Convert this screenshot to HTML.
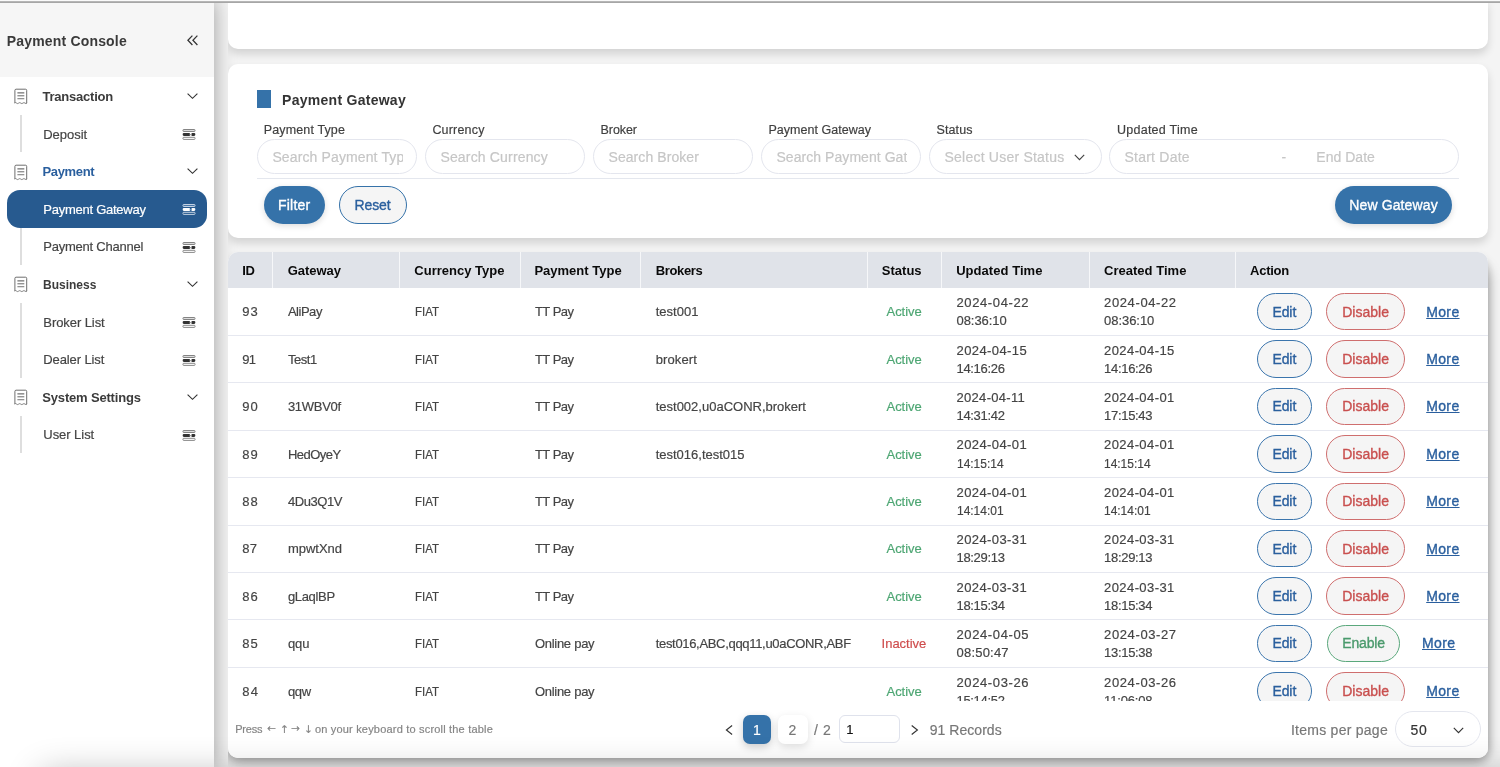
<!DOCTYPE html>
<html lang="en">
<head>
<meta charset="utf-8">
<title>Payment Console - Payment Gateway</title>
<style>
*{box-sizing:border-box;margin:0;padding:0}
html,body{width:1500px;height:767px;overflow:hidden}
body{font-family:"Liberation Sans",sans-serif;background:#f4f4f4;color:#444;position:relative;font-size:13px}
.topline{position:absolute;left:0;top:0;width:1500px;height:3px;background:linear-gradient(#fafafa 0,#fafafa 1px,#b6b6b6 1px,#b6b6b6 2px,#a6a6a6 2px,#a6a6a6 3px);z-index:50}
.abs{position:absolute;white-space:nowrap}
.side,.main{will-change:transform}
.main{position:absolute;left:228.3px;top:0;width:1271.7px;height:767px;z-index:2;overflow:hidden}
.t{position:absolute;white-space:nowrap;line-height:16px;display:block;-webkit-text-stroke:0.18px}
/* ---------- sidebar ---------- */
.side{position:absolute;left:0;top:0;width:214px;height:767px;background:#fff;box-shadow:0 0 20px rgba(0,0,0,.36);z-index:1}
.side .head{position:absolute;left:0;top:0;width:214px;height:77px;background:#f6f6f6}
.side .head svg{position:absolute;left:186.8px;top:35.2px}
.menu{position:absolute;left:0;top:77.2px;width:214px}
.mi{position:relative;height:37.6px;width:214px}
.mi .ric{position:absolute;left:13.5px;top:11.3px}
.mi .chev{position:absolute;left:186.6px;top:15.6px}
.si{position:relative;height:37.6px;width:214px}
.si:before{content:"";position:absolute;left:20.3px;top:0;width:1.8px;height:37.6px;background:#dedede}
.si .cic{position:absolute;left:181.8px;top:14.2px}
.si.on .pill{position:absolute;left:6.9px;top:0;width:199.9px;height:37.6px;border-radius:13px;background:#275a8f}
/* ---------- cards ---------- */
.card{position:absolute;left:0;width:1260.2px;background:#fff;z-index:2;box-shadow:0 5px 9px rgba(0,0,0,.14)}
.c0{top:0;height:48.5px;border-radius:0 0 10px 10px}
.c1{top:63.5px;height:174px;border-radius:10px}
.c2{top:252px;height:505.6px;border-radius:10px;overflow:hidden}
.c2sh{position:absolute;left:0;top:266px;width:1260.2px;height:491.6px;border-radius:10px;z-index:1;box-shadow:0 1px 13px rgba(0,0,0,.38)}
/* ---------- filter ---------- */
.blk{position:absolute;left:28.7px;top:26.5px;width:14px;height:18px;background:#3572a9}
.inp{position:absolute;top:75.3px;height:35.3px;border:1px solid #e4e6ee;border-radius:18px;background:#fff}
.inp .t{margin:-1px 0 0 -1px}
.inp .selchev{position:absolute;left:144.4px;top:13.8px}
.hr{position:absolute;left:28.7px;top:114.4px;width:1202.6px;height:1px;background:#e4e7ee}
.btn{position:absolute;top:122.5px;height:37.6px;border-radius:19px}
.btn.pri{background:#3572a9;box-shadow:0 2px 6px rgba(0,0,0,.14)}
.btn.sec{background:#f5f5f5;border:1px solid #3572a9}
.btn.sec .t{margin:-1px 0 0 -1px}
/* ---------- table ---------- */
.thead{position:absolute;left:0;top:0;width:1260.2px;height:36.3px;background:#e0e3e9}
.th{position:absolute;top:0;height:36.3px;border-right:1px solid #f6f7f9}
.th.last{border-right:0}
.tbody{position:absolute;left:0;top:36px;width:1260.2px;height:413px;overflow:hidden}
.tr{position:relative;height:47.42px;width:1260.2px}
.tr:after{content:"";position:absolute;left:0;bottom:-0.5px;width:1260.2px;height:1px;background:#e6e8f0}
.ab{position:absolute;top:5px;height:37.4px;border-radius:19px;border:1px solid;background:#f5f5f5}
.ab .t{margin:-1px 0 0 -1px}
.ab.ed{left:1028.7px;width:55px;border-color:#3b75ad}
.ab.dis{left:1098px;width:78.7px;border-color:#cf6e6e}
.ab.en{left:1098.5px;width:73.8px;border-color:#5aa87c}
.more{text-decoration:underline}
/* ---------- pagination ---------- */
.pag{position:absolute;left:0;top:449px;width:1260.2px;height:56.6px;background:#fff}
.pg{position:absolute;top:13.9px;width:29.7px;height:28.8px;border-radius:7px;background:#fff;box-shadow:0 3px 9px rgba(0,0,0,.13)}
.pg.on{width:28.1px;background:#3572a9;box-shadow:0 3px 9px rgba(0,0,0,.2)}
.pin{position:absolute;left:610.7px;top:13.9px;width:61.7px;height:28.6px;border:1px solid #dfe2ec;border-radius:6px}
.pin .t{margin:-1px 0 0 -1px}
.psel{position:absolute;left:1166.9px;top:10.3px;width:86px;height:35.5px;border:1px solid #e4e6ee;border-radius:18px}
.psel .t{margin:-1px 0 0 -1px}
.psel svg{position:absolute;left:57.4px;top:14.6px}
.botfade{position:absolute;left:0;top:0;width:1500px;height:767px;overflow:hidden;z-index:60;pointer-events:none}
.botfade i{position:absolute;left:42px;top:775px;width:1600px;height:60px;box-shadow:0 0 36px rgba(0,0,0,.3)}
</style>
</head>
<body>
<div class="topline"></div>

<div class="side">
  <div class="head">
    <span class="t" style="left:6.70px;top:33.00px;font-size:14px;line-height:16px;letter-spacing:0.180px;font-weight:bold;-webkit-text-stroke:0;color:#3a3a3a;">Payment Console</span>
    <svg width="12" height="11" viewBox="0 0 12 11" fill="none" stroke="#333" stroke-width="1.25"><path d="M5.4 0.6 L0.9 5.3 L5.4 10"/><path d="M10.4 0.6 L5.9 5.3 L10.4 10"/></svg>
  </div>
  <div class="menu">
    <div class="mi"><svg class="ric" width="14" height="17" viewBox="0 0 14 17" fill="none" stroke="#666" stroke-width="0.95"><path d="M0.9 15 V2.4 Q0.9 1.2 2.1 1.2 H11.5 Q12.7 1.2 12.7 2.4 V15"/><path d="M0.5 15.1 q1.05 -1 2.1 0 t2.1 0 t2.1 0 t2.1 0 t2.1 0 t2.1 0" stroke-width="0.8"/><path d="M3.4 4.9 H10.3" stroke="#444"/><path d="M3.4 7.8 H10.3" stroke="#606060"/><path d="M3.4 10.7 H10.3" stroke="#808080" stroke-width="1.1"/></svg><span class="t" style="left:42.40px;top:11.80px;font-size:13px;line-height:15px;letter-spacing:-0.217px;font-weight:bold;-webkit-text-stroke:0;color:#3b3b3b;">Transaction</span><svg class="chev" width="11" height="7" viewBox="0 0 11 7" fill="none" stroke="#333" stroke-width="1.15"><path d="M0.6 0.6 L5.5 5.3 L10.4 0.6"/></svg></div>
    <div class="si"><span class="t" style="left:43.20px;top:12.20px;font-size:13px;line-height:15px;letter-spacing:-0.014px;color:#444;">Deposit</span><svg class="cic" width="14" height="12" viewBox="0 0 14 12" fill="none"><rect x="0.95" y="0.5" width="12.1" height="2" rx="0.8" fill="#dcdcdc" stroke="#6a6a6a" stroke-width="0.8"/><rect x="0.7" y="3.9" width="12.6" height="3" rx="1.1" fill="#333"/><rect x="7.8" y="3.9" width="1.8" height="3" fill="#fff"/><rect x="7.8" y="5.1" width="1.8" height="0.6" fill="#666"/><rect x="0.95" y="8.3" width="12.1" height="2.1" rx="0.8" fill="#fff" stroke="#6a6a6a" stroke-width="0.8"/></svg></div>
    <div class="mi"><svg class="ric" width="14" height="17" viewBox="0 0 14 17" fill="none" stroke="#666" stroke-width="0.95"><path d="M0.9 15 V2.4 Q0.9 1.2 2.1 1.2 H11.5 Q12.7 1.2 12.7 2.4 V15"/><path d="M0.5 15.1 q1.05 -1 2.1 0 t2.1 0 t2.1 0 t2.1 0 t2.1 0 t2.1 0" stroke-width="0.8"/><path d="M3.4 4.9 H10.3" stroke="#444"/><path d="M3.4 7.8 H10.3" stroke="#606060"/><path d="M3.4 10.7 H10.3" stroke="#808080" stroke-width="1.1"/></svg><span class="t" style="left:42.40px;top:11.60px;font-size:13px;line-height:15px;letter-spacing:-0.331px;font-weight:bold;-webkit-text-stroke:0;color:#2a5f9e;">Payment</span><svg class="chev" width="11" height="7" viewBox="0 0 11 7" fill="none" stroke="#333" stroke-width="1.15"><path d="M0.6 0.6 L5.5 5.3 L10.4 0.6"/></svg></div>
    <div class="si on"><div class="pill"></div><span class="t" style="left:43.30px;top:12.00px;font-size:13px;line-height:15px;letter-spacing:-0.258px;color:#fff;">Payment Gateway</span><svg class="cic" width="14" height="12" viewBox="0 0 14 12" fill="none"><rect x="0.95" y="0.5" width="12.1" height="2" rx="0.8" fill="#4a78a8" stroke="#e8eef5" stroke-width="0.8"/><rect x="0.7" y="3.9" width="12.6" height="3" rx="1.1" fill="#fff"/><rect x="7.8" y="3.9" width="1.8" height="3" fill="#275a8f"/><rect x="7.8" y="5.1" width="1.8" height="0.6" fill="#9db6d0"/><rect x="0.95" y="8.3" width="12.1" height="2.1" rx="0.8" fill="#275a8f" stroke="#e8eef5" stroke-width="0.8"/></svg></div>
    <div class="si"><span class="t" style="left:43.30px;top:11.40px;font-size:13px;line-height:15px;letter-spacing:-0.238px;color:#444;">Payment Channel</span><svg class="cic" width="14" height="12" viewBox="0 0 14 12" fill="none"><rect x="0.95" y="0.5" width="12.1" height="2" rx="0.8" fill="#dcdcdc" stroke="#6a6a6a" stroke-width="0.8"/><rect x="0.7" y="3.9" width="12.6" height="3" rx="1.1" fill="#333"/><rect x="7.8" y="3.9" width="1.8" height="3" fill="#fff"/><rect x="7.8" y="5.1" width="1.8" height="0.6" fill="#666"/><rect x="0.95" y="8.3" width="12.1" height="2.1" rx="0.8" fill="#fff" stroke="#6a6a6a" stroke-width="0.8"/></svg></div>
    <div class="mi"><svg class="ric" width="14" height="17" viewBox="0 0 14 17" fill="none" stroke="#666" stroke-width="0.95"><path d="M0.9 15 V2.4 Q0.9 1.2 2.1 1.2 H11.5 Q12.7 1.2 12.7 2.4 V15"/><path d="M0.5 15.1 q1.05 -1 2.1 0 t2.1 0 t2.1 0 t2.1 0 t2.1 0 t2.1 0" stroke-width="0.8"/><path d="M3.4 4.9 H10.3" stroke="#444"/><path d="M3.4 7.8 H10.3" stroke="#606060"/><path d="M3.4 10.7 H10.3" stroke="#808080" stroke-width="1.1"/></svg><span class="t" style="left:42.60px;top:11.80px;font-size:13px;line-height:15px;font-weight:bold;-webkit-text-stroke:0;color:#3b3b3b;transform:scaleX(0.9239);transform-origin:0 0;">Business</span><svg class="chev" width="11" height="7" viewBox="0 0 11 7" fill="none" stroke="#333" stroke-width="1.15"><path d="M0.6 0.6 L5.5 5.3 L10.4 0.6"/></svg></div>
    <div class="si"><span class="t" style="left:43.30px;top:12.20px;font-size:13px;line-height:15px;letter-spacing:-0.073px;color:#444;">Broker List</span><svg class="cic" width="14" height="12" viewBox="0 0 14 12" fill="none"><rect x="0.95" y="0.5" width="12.1" height="2" rx="0.8" fill="#dcdcdc" stroke="#6a6a6a" stroke-width="0.8"/><rect x="0.7" y="3.9" width="12.6" height="3" rx="1.1" fill="#333"/><rect x="7.8" y="3.9" width="1.8" height="3" fill="#fff"/><rect x="7.8" y="5.1" width="1.8" height="0.6" fill="#666"/><rect x="0.95" y="8.3" width="12.1" height="2.1" rx="0.8" fill="#fff" stroke="#6a6a6a" stroke-width="0.8"/></svg></div>
    <div class="si"><span class="t" style="left:43.30px;top:11.60px;font-size:13px;line-height:15px;letter-spacing:-0.114px;color:#444;">Dealer List</span><svg class="cic" width="14" height="12" viewBox="0 0 14 12" fill="none"><rect x="0.95" y="0.5" width="12.1" height="2" rx="0.8" fill="#dcdcdc" stroke="#6a6a6a" stroke-width="0.8"/><rect x="0.7" y="3.9" width="12.6" height="3" rx="1.1" fill="#333"/><rect x="7.8" y="3.9" width="1.8" height="3" fill="#fff"/><rect x="7.8" y="5.1" width="1.8" height="0.6" fill="#666"/><rect x="0.95" y="8.3" width="12.1" height="2.1" rx="0.8" fill="#fff" stroke="#6a6a6a" stroke-width="0.8"/></svg></div>
    <div class="mi"><svg class="ric" width="14" height="17" viewBox="0 0 14 17" fill="none" stroke="#666" stroke-width="0.95"><path d="M0.9 15 V2.4 Q0.9 1.2 2.1 1.2 H11.5 Q12.7 1.2 12.7 2.4 V15"/><path d="M0.5 15.1 q1.05 -1 2.1 0 t2.1 0 t2.1 0 t2.1 0 t2.1 0 t2.1 0" stroke-width="0.8"/><path d="M3.4 4.9 H10.3" stroke="#444"/><path d="M3.4 7.8 H10.3" stroke="#606060"/><path d="M3.4 10.7 H10.3" stroke="#808080" stroke-width="1.1"/></svg><span class="t" style="left:42.30px;top:12.00px;font-size:13px;line-height:15px;letter-spacing:-0.181px;font-weight:bold;-webkit-text-stroke:0;color:#3b3b3b;">System Settings</span><svg class="chev" width="11" height="7" viewBox="0 0 11 7" fill="none" stroke="#333" stroke-width="1.15"><path d="M0.6 0.6 L5.5 5.3 L10.4 0.6"/></svg></div>
    <div class="si"><span class="t" style="left:43.30px;top:11.40px;font-size:13px;line-height:15px;letter-spacing:-0.048px;color:#444;">User List</span><svg class="cic" width="14" height="12" viewBox="0 0 14 12" fill="none"><rect x="0.95" y="0.5" width="12.1" height="2" rx="0.8" fill="#dcdcdc" stroke="#6a6a6a" stroke-width="0.8"/><rect x="0.7" y="3.9" width="12.6" height="3" rx="1.1" fill="#333"/><rect x="7.8" y="3.9" width="1.8" height="3" fill="#fff"/><rect x="7.8" y="5.1" width="1.8" height="0.6" fill="#666"/><rect x="0.95" y="8.3" width="12.1" height="2.1" rx="0.8" fill="#fff" stroke="#6a6a6a" stroke-width="0.8"/></svg></div>
  </div>
</div>

<div class="main">
<div class="card c0"></div>

<div class="card c1">
  <div class="blk"></div><span class="t" style="left:54.10px;top:28.50px;font-size:14px;line-height:16px;letter-spacing:0.269px;font-weight:bold;-webkit-text-stroke:0;color:#333;">Payment Gateway</span>
  <span class="t" style="left:35.80px;top:59.50px;font-size:12.5px;line-height:14px;letter-spacing:0.130px;color:#3f3f3f;">Payment Type</span>
  <span class="t" style="left:204.40px;top:59.50px;font-size:12.5px;line-height:14px;letter-spacing:0.184px;color:#3f3f3f;">Currency</span>
  <span class="t" style="left:372.50px;top:59.50px;font-size:12.5px;line-height:14px;letter-spacing:-0.062px;color:#3f3f3f;">Broker</span>
  <span class="t" style="left:540.50px;top:59.50px;font-size:12.5px;line-height:14px;letter-spacing:0.020px;color:#3f3f3f;">Payment Gateway</span>
  <span class="t" style="left:708.50px;top:59.50px;font-size:12.5px;line-height:14px;letter-spacing:0.113px;color:#3f3f3f;">Status</span>
  <span class="t" style="left:889.00px;top:59.50px;font-size:12.5px;line-height:14px;letter-spacing:0.252px;color:#3f3f3f;">Updated Time</span>
  <div class="inp" style="left:28.9px;width:160.3px"><span class="t" style="left:15.50px;top:10.20px;font-size:14px;line-height:16px;letter-spacing:0.125px;color:#c6c6c6;width:130.40px;overflow:hidden">Search Payment Type</span></div>
  <div class="inp" style="left:196.9px;width:160.3px"><span class="t" style="left:15.50px;top:10.20px;font-size:14px;line-height:16px;letter-spacing:0.168px;color:#c6c6c6;">Search Currency</span></div>
  <div class="inp" style="left:364.9px;width:160.3px"><span class="t" style="left:15.60px;top:10.20px;font-size:14px;line-height:16px;letter-spacing:0.076px;color:#c6c6c6;">Search Broker</span></div>
  <div class="inp" style="left:532.9px;width:160.3px"><span class="t" style="left:15.60px;top:10.20px;font-size:14px;line-height:16px;letter-spacing:0.052px;color:#c6c6c6;width:130.10px;overflow:hidden">Search Payment Gateway</span></div>
  <div class="inp" style="left:701.0px;width:172.6px"><span class="t" style="left:15.50px;top:10.20px;font-size:14px;line-height:16px;letter-spacing:0.222px;color:#c6c6c6;">Select User Status</span><svg class="selchev" width="11" height="7" viewBox="0 0 11 7" fill="none" stroke="#444" stroke-width="1.15"><path d="M0.8 0.8 L5.5 5.6 L10.2 0.8"/></svg></div>
  <div class="inp" style="left:881.0px;width:350.3px"><span class="t" style="left:15.50px;top:10.20px;font-size:14px;line-height:16px;letter-spacing:0.230px;color:#c6c6c6;">Start Date</span><span class="t" style="left:172.60px;top:10.20px;font-size:14px;line-height:16px;color:#c6c6c6;">-</span><span class="t" style="left:207.30px;top:10.20px;font-size:14px;line-height:16px;letter-spacing:0.033px;color:#c6c6c6;">End Date</span></div>
  <div class="hr"></div>
  <div class="btn pri" style="left:35.7px;width:61px"><span class="t" style="left:14.40px;top:11.00px;font-size:14px;line-height:16px;letter-spacing:0.178px;-webkit-text-stroke:0.35px;color:#fff;">Filter</span></div>
  <div class="btn sec" style="left:110.9px;width:68px"><span class="t" style="left:15.60px;top:11.00px;font-size:14px;line-height:16px;letter-spacing:-0.092px;-webkit-text-stroke:0.35px;color:#2a5f9e;">Reset</span></div>
  <div class="btn pri" style="left:1106.7px;width:117.6px"><span class="t" style="left:14.60px;top:11.00px;font-size:14px;line-height:16px;letter-spacing:0.125px;-webkit-text-stroke:0.35px;color:#fff;">New Gateway</span></div>
</div>

<div class="c2sh"></div>
<div class="card c2">
  <div class="thead">
  <div class="th" style="left:0.0px;width:45.2px"></div><span class="t" style="left:14.30px;top:11.00px;font-size:13px;line-height:15px;letter-spacing:-0.400px;font-weight:bold;-webkit-text-stroke:0;color:#0a0a0a;">ID</span>
  <div class="th" style="left:45.2px;width:126.8px"></div><span class="t" style="left:59.70px;top:11.00px;font-size:13px;line-height:15px;letter-spacing:-0.045px;font-weight:bold;-webkit-text-stroke:0;color:#0a0a0a;">Gateway</span>
  <div class="th" style="left:172.0px;width:120.6px"></div><span class="t" style="left:186.30px;top:11.00px;font-size:13px;line-height:15px;letter-spacing:0.011px;font-weight:bold;-webkit-text-stroke:0;color:#0a0a0a;">Currency Type</span>
  <div class="th" style="left:292.6px;width:120.5px"></div><span class="t" style="left:306.40px;top:11.00px;font-size:13px;line-height:15px;letter-spacing:0.011px;font-weight:bold;-webkit-text-stroke:0;color:#0a0a0a;">Payment Type</span>
  <div class="th" style="left:413.1px;width:227.0px"></div><span class="t" style="left:427.70px;top:11.00px;font-size:13px;line-height:15px;letter-spacing:-0.357px;font-weight:bold;-webkit-text-stroke:0;color:#0a0a0a;">Brokers</span>
  <div class="th" style="left:640.1px;width:73.8px"></div><span class="t" style="left:653.80px;top:11.00px;font-size:13px;line-height:15px;letter-spacing:0.014px;font-weight:bold;-webkit-text-stroke:0;color:#0a0a0a;">Status</span>
  <div class="th" style="left:713.9px;width:148.0px"></div><span class="t" style="left:728.20px;top:11.00px;font-size:13px;line-height:15px;letter-spacing:0.043px;font-weight:bold;-webkit-text-stroke:0;color:#0a0a0a;">Updated Time</span>
  <div class="th" style="left:861.9px;width:146.2px"></div><span class="t" style="left:876.00px;top:11.00px;font-size:13px;line-height:15px;letter-spacing:0.025px;font-weight:bold;-webkit-text-stroke:0;color:#0a0a0a;">Created Time</span>
  <div class="th last" style="left:1008.1px;width:252.1px"></div><span class="t" style="left:1022.10px;top:11.00px;font-size:13px;line-height:15px;letter-spacing:-0.269px;font-weight:bold;-webkit-text-stroke:0;color:#0a0a0a;">Action</span>
  </div>
  <div class="tbody">
  <div class="tr">
  <span class="t" style="left:14.30px;top:16.00px;font-size:13px;line-height:15px;letter-spacing:0.944px;">93</span>
  <span class="t" style="left:59.90px;top:16.00px;font-size:13px;line-height:15px;letter-spacing:-0.471px;">AliPay</span>
  <span class="t" style="left:186.50px;top:16.00px;font-size:13px;line-height:15px;transform:scaleX(0.8862);transform-origin:0 0;">FIAT</span>
  <span class="t" style="left:306.90px;top:16.00px;font-size:13px;line-height:15px;letter-spacing:-0.493px;">TT Pay</span>
  <span class="t" style="left:427.70px;top:16.00px;font-size:13px;line-height:15px;letter-spacing:0.027px;">test001</span>
  <span class="t" style="left:658.50px;top:16.00px;font-size:13px;line-height:15px;letter-spacing:-0.040px;color:#4da673;">Active</span>
  <span class="t" style="left:728.50px;top:7.00px;font-size:13px;line-height:15px;letter-spacing:0.612px;">2024-04-22</span><span class="t" style="left:728.50px;top:25.00px;font-size:13px;line-height:15px;letter-spacing:-0.051px;">08:36:10</span><span class="t" style="left:876.10px;top:7.00px;font-size:13px;line-height:15px;letter-spacing:0.612px;">2024-04-22</span><span class="t" style="left:876.10px;top:25.00px;font-size:13px;line-height:15px;letter-spacing:-0.051px;">08:36:10</span>
  <span class="ab ed"><span class="t" style="left:15.70px;top:11.00px;font-size:14px;line-height:16px;letter-spacing:-0.074px;-webkit-text-stroke:0.35px;color:#2a5f9e;">Edit</span></span>
  <span class="ab dis"><span class="t" style="left:16.20px;top:11.00px;font-size:14px;line-height:16px;letter-spacing:0.018px;-webkit-text-stroke:0.35px;color:#c9504f;">Disable</span></span>
  <span class="t more" style="left:1198.20px;top:16.00px;font-size:14px;line-height:16px;letter-spacing:0.369px;-webkit-text-stroke:0.35px;color:#2a5f9e;">More</span>
  </div>
  <div class="tr">
  <span class="t" style="left:14.30px;top:16.58px;font-size:13px;line-height:15px;letter-spacing:-0.656px;">91</span>
  <span class="t" style="left:59.90px;top:16.58px;font-size:13px;line-height:15px;letter-spacing:-0.417px;">Test1</span>
  <span class="t" style="left:186.50px;top:16.58px;font-size:13px;line-height:15px;transform:scaleX(0.8862);transform-origin:0 0;">FIAT</span>
  <span class="t" style="left:306.90px;top:16.58px;font-size:13px;line-height:15px;letter-spacing:-0.493px;">TT Pay</span>
  <span class="t" style="left:427.70px;top:16.58px;font-size:13px;line-height:15px;letter-spacing:0.124px;">brokert</span>
  <span class="t" style="left:658.50px;top:16.58px;font-size:13px;line-height:15px;letter-spacing:-0.040px;color:#4da673;">Active</span>
  <span class="t" style="left:728.50px;top:7.58px;font-size:13px;line-height:15px;letter-spacing:0.406px;">2024-04-15</span><span class="t" style="left:728.50px;top:25.58px;font-size:13px;line-height:15px;letter-spacing:-0.316px;">14:16:26</span><span class="t" style="left:876.10px;top:7.58px;font-size:13px;line-height:15px;letter-spacing:0.406px;">2024-04-15</span><span class="t" style="left:876.10px;top:25.58px;font-size:13px;line-height:15px;letter-spacing:-0.316px;">14:16:26</span>
  <span class="ab ed"><span class="t" style="left:15.70px;top:10.58px;font-size:14px;line-height:16px;letter-spacing:-0.074px;-webkit-text-stroke:0.35px;color:#2a5f9e;">Edit</span></span>
  <span class="ab dis"><span class="t" style="left:16.20px;top:10.58px;font-size:14px;line-height:16px;letter-spacing:0.018px;-webkit-text-stroke:0.35px;color:#c9504f;">Disable</span></span>
  <span class="t more" style="left:1198.20px;top:15.58px;font-size:14px;line-height:16px;letter-spacing:0.369px;-webkit-text-stroke:0.35px;color:#2a5f9e;">More</span>
  </div>
  <div class="tr">
  <span class="t" style="left:14.30px;top:16.16px;font-size:13px;line-height:15px;letter-spacing:0.944px;">90</span>
  <span class="t" style="left:59.90px;top:16.16px;font-size:13px;line-height:15px;letter-spacing:-0.290px;">31WBV0f</span>
  <span class="t" style="left:186.50px;top:16.16px;font-size:13px;line-height:15px;transform:scaleX(0.8862);transform-origin:0 0;">FIAT</span>
  <span class="t" style="left:306.90px;top:16.16px;font-size:13px;line-height:15px;letter-spacing:-0.493px;">TT Pay</span>
  <span class="t" style="left:427.70px;top:16.16px;font-size:13px;line-height:15px;">test002,u0aCONR,brokert</span>
  <span class="t" style="left:658.50px;top:16.16px;font-size:13px;line-height:15px;letter-spacing:-0.040px;color:#4da673;">Active</span>
  <span class="t" style="left:728.50px;top:7.16px;font-size:13px;line-height:15px;letter-spacing:0.307px;">2024-04-11</span><span class="t" style="left:728.50px;top:25.16px;font-size:13px;line-height:15px;letter-spacing:-0.316px;">14:31:42</span><span class="t" style="left:876.10px;top:7.16px;font-size:13px;line-height:15px;letter-spacing:0.406px;">2024-04-01</span><span class="t" style="left:876.10px;top:25.16px;font-size:13px;line-height:15px;letter-spacing:-0.316px;">17:15:43</span>
  <span class="ab ed"><span class="t" style="left:15.70px;top:10.16px;font-size:14px;line-height:16px;letter-spacing:-0.074px;-webkit-text-stroke:0.35px;color:#2a5f9e;">Edit</span></span>
  <span class="ab dis"><span class="t" style="left:16.20px;top:10.16px;font-size:14px;line-height:16px;letter-spacing:0.018px;-webkit-text-stroke:0.35px;color:#c9504f;">Disable</span></span>
  <span class="t more" style="left:1198.20px;top:15.16px;font-size:14px;line-height:16px;letter-spacing:0.369px;-webkit-text-stroke:0.35px;color:#2a5f9e;">More</span>
  </div>
  <div class="tr">
  <span class="t" style="left:14.30px;top:16.74px;font-size:13px;line-height:15px;letter-spacing:0.944px;">89</span>
  <span class="t" style="left:59.90px;top:16.74px;font-size:13px;line-height:15px;letter-spacing:-0.526px;">HedOyeY</span>
  <span class="t" style="left:186.50px;top:16.74px;font-size:13px;line-height:15px;transform:scaleX(0.8862);transform-origin:0 0;">FIAT</span>
  <span class="t" style="left:306.90px;top:16.74px;font-size:13px;line-height:15px;letter-spacing:-0.493px;">TT Pay</span>
  <span class="t" style="left:427.70px;top:16.74px;font-size:13px;line-height:15px;letter-spacing:-0.007px;">test016,test015</span>
  <span class="t" style="left:658.50px;top:16.74px;font-size:13px;line-height:15px;letter-spacing:-0.040px;color:#4da673;">Active</span>
  <span class="t" style="left:728.50px;top:6.74px;font-size:13px;line-height:15px;letter-spacing:0.406px;">2024-04-01</span><span class="t" style="left:728.50px;top:25.74px;font-size:13px;line-height:15px;transform:scaleX(0.9198);transform-origin:0 0;">14:15:14</span><span class="t" style="left:876.10px;top:6.74px;font-size:13px;line-height:15px;letter-spacing:0.406px;">2024-04-01</span><span class="t" style="left:876.10px;top:25.74px;font-size:13px;line-height:15px;transform:scaleX(0.9198);transform-origin:0 0;">14:15:14</span>
  <span class="ab ed"><span class="t" style="left:15.70px;top:10.74px;font-size:14px;line-height:16px;letter-spacing:-0.074px;-webkit-text-stroke:0.35px;color:#2a5f9e;">Edit</span></span>
  <span class="ab dis"><span class="t" style="left:16.20px;top:10.74px;font-size:14px;line-height:16px;letter-spacing:0.018px;-webkit-text-stroke:0.35px;color:#c9504f;">Disable</span></span>
  <span class="t more" style="left:1198.20px;top:15.74px;font-size:14px;line-height:16px;letter-spacing:0.369px;-webkit-text-stroke:0.35px;color:#2a5f9e;">More</span>
  </div>
  <div class="tr">
  <span class="t" style="left:14.30px;top:16.32px;font-size:13px;line-height:15px;letter-spacing:0.944px;">88</span>
  <span class="t" style="left:59.90px;top:16.32px;font-size:13px;line-height:15px;letter-spacing:-0.416px;">4Du3Q1V</span>
  <span class="t" style="left:186.50px;top:16.32px;font-size:13px;line-height:15px;transform:scaleX(0.8862);transform-origin:0 0;">FIAT</span>
  <span class="t" style="left:306.90px;top:16.32px;font-size:13px;line-height:15px;letter-spacing:-0.493px;">TT Pay</span>
  
  <span class="t" style="left:658.50px;top:16.32px;font-size:13px;line-height:15px;letter-spacing:-0.040px;color:#4da673;">Active</span>
  <span class="t" style="left:728.50px;top:7.32px;font-size:13px;line-height:15px;letter-spacing:0.406px;">2024-04-01</span><span class="t" style="left:728.50px;top:25.32px;font-size:13px;line-height:15px;transform:scaleX(0.9198);transform-origin:0 0;">14:14:01</span><span class="t" style="left:876.10px;top:7.32px;font-size:13px;line-height:15px;letter-spacing:0.406px;">2024-04-01</span><span class="t" style="left:876.10px;top:25.32px;font-size:13px;line-height:15px;transform:scaleX(0.9198);transform-origin:0 0;">14:14:01</span>
  <span class="ab ed"><span class="t" style="left:15.70px;top:10.32px;font-size:14px;line-height:16px;letter-spacing:-0.074px;-webkit-text-stroke:0.35px;color:#2a5f9e;">Edit</span></span>
  <span class="ab dis"><span class="t" style="left:16.20px;top:10.32px;font-size:14px;line-height:16px;letter-spacing:0.018px;-webkit-text-stroke:0.35px;color:#c9504f;">Disable</span></span>
  <span class="t more" style="left:1198.20px;top:15.32px;font-size:14px;line-height:16px;letter-spacing:0.369px;-webkit-text-stroke:0.35px;color:#2a5f9e;">More</span>
  </div>
  <div class="tr">
  <span class="t" style="left:14.30px;top:15.90px;font-size:13px;line-height:15px;letter-spacing:0.144px;">87</span>
  <span class="t" style="left:59.90px;top:15.90px;font-size:13px;line-height:15px;letter-spacing:-0.014px;">mpwtXnd</span>
  <span class="t" style="left:186.50px;top:15.90px;font-size:13px;line-height:15px;transform:scaleX(0.8862);transform-origin:0 0;">FIAT</span>
  <span class="t" style="left:306.90px;top:15.90px;font-size:13px;line-height:15px;letter-spacing:-0.493px;">TT Pay</span>
  
  <span class="t" style="left:658.50px;top:15.90px;font-size:13px;line-height:15px;letter-spacing:-0.040px;color:#4da673;">Active</span>
  <span class="t" style="left:728.50px;top:6.90px;font-size:13px;line-height:15px;letter-spacing:0.406px;">2024-03-31</span><span class="t" style="left:728.50px;top:24.90px;font-size:13px;line-height:15px;letter-spacing:-0.316px;">18:29:13</span><span class="t" style="left:876.10px;top:6.90px;font-size:13px;line-height:15px;letter-spacing:0.406px;">2024-03-31</span><span class="t" style="left:876.10px;top:24.90px;font-size:13px;line-height:15px;letter-spacing:-0.316px;">18:29:13</span>
  <span class="ab ed"><span class="t" style="left:15.70px;top:10.90px;font-size:14px;line-height:16px;letter-spacing:-0.074px;-webkit-text-stroke:0.35px;color:#2a5f9e;">Edit</span></span>
  <span class="ab dis"><span class="t" style="left:16.20px;top:10.90px;font-size:14px;line-height:16px;letter-spacing:0.018px;-webkit-text-stroke:0.35px;color:#c9504f;">Disable</span></span>
  <span class="t more" style="left:1198.20px;top:15.90px;font-size:14px;line-height:16px;letter-spacing:0.369px;-webkit-text-stroke:0.35px;color:#2a5f9e;">More</span>
  </div>
  <div class="tr">
  <span class="t" style="left:14.30px;top:16.48px;font-size:13px;line-height:15px;letter-spacing:0.944px;">86</span>
  <span class="t" style="left:59.90px;top:16.48px;font-size:13px;line-height:15px;letter-spacing:-0.326px;">gLaqlBP</span>
  <span class="t" style="left:186.50px;top:16.48px;font-size:13px;line-height:15px;transform:scaleX(0.8862);transform-origin:0 0;">FIAT</span>
  <span class="t" style="left:306.90px;top:16.48px;font-size:13px;line-height:15px;letter-spacing:-0.493px;">TT Pay</span>
  
  <span class="t" style="left:658.50px;top:16.48px;font-size:13px;line-height:15px;letter-spacing:-0.040px;color:#4da673;">Active</span>
  <span class="t" style="left:728.50px;top:7.48px;font-size:13px;line-height:15px;letter-spacing:0.406px;">2024-03-31</span><span class="t" style="left:728.50px;top:25.48px;font-size:13px;line-height:15px;letter-spacing:-0.316px;">18:15:34</span><span class="t" style="left:876.10px;top:7.48px;font-size:13px;line-height:15px;letter-spacing:0.406px;">2024-03-31</span><span class="t" style="left:876.10px;top:25.48px;font-size:13px;line-height:15px;letter-spacing:-0.316px;">18:15:34</span>
  <span class="ab ed"><span class="t" style="left:15.70px;top:10.48px;font-size:14px;line-height:16px;letter-spacing:-0.074px;-webkit-text-stroke:0.35px;color:#2a5f9e;">Edit</span></span>
  <span class="ab dis"><span class="t" style="left:16.20px;top:10.48px;font-size:14px;line-height:16px;letter-spacing:0.018px;-webkit-text-stroke:0.35px;color:#c9504f;">Disable</span></span>
  <span class="t more" style="left:1198.20px;top:15.48px;font-size:14px;line-height:16px;letter-spacing:0.369px;-webkit-text-stroke:0.35px;color:#2a5f9e;">More</span>
  </div>
  <div class="tr">
  <span class="t" style="left:14.30px;top:16.06px;font-size:13px;line-height:15px;letter-spacing:0.944px;">85</span>
  <span class="t" style="left:59.90px;top:16.06px;font-size:13px;line-height:15px;letter-spacing:-0.042px;">qqu</span>
  <span class="t" style="left:186.50px;top:16.06px;font-size:13px;line-height:15px;transform:scaleX(0.8862);transform-origin:0 0;">FIAT</span>
  <span class="t" style="left:306.90px;top:16.06px;font-size:13px;line-height:15px;letter-spacing:-0.273px;">Online pay</span>
  <span class="t" style="left:427.70px;top:16.06px;font-size:13px;line-height:15px;letter-spacing:-0.316px;">test016,ABC,qqq11,u0aCONR,ABF</span>
  <span class="t" style="left:653.60px;top:16.06px;font-size:13px;line-height:15px;letter-spacing:-0.014px;color:#cf4d4d;">Inactive</span>
  <span class="t" style="left:728.50px;top:7.06px;font-size:13px;line-height:15px;letter-spacing:0.612px;">2024-04-05</span><span class="t" style="left:728.50px;top:25.06px;font-size:13px;line-height:15px;letter-spacing:0.213px;">08:50:47</span><span class="t" style="left:876.10px;top:7.06px;font-size:13px;line-height:15px;letter-spacing:0.612px;">2024-03-27</span><span class="t" style="left:876.10px;top:25.06px;font-size:13px;line-height:15px;letter-spacing:-0.316px;">13:15:38</span>
  <span class="ab ed"><span class="t" style="left:15.70px;top:10.06px;font-size:14px;line-height:16px;letter-spacing:-0.074px;-webkit-text-stroke:0.35px;color:#2a5f9e;">Edit</span></span>
  <span class="ab en"><span class="t" style="left:15.80px;top:10.06px;font-size:14px;line-height:16px;letter-spacing:-0.179px;-webkit-text-stroke:0.35px;color:#4a9a6c;">Enable</span></span>
  <span class="t more" style="left:1194.00px;top:15.06px;font-size:14px;line-height:16px;letter-spacing:0.369px;-webkit-text-stroke:0.35px;color:#2a5f9e;">More</span>
  </div>
  <div class="tr">
  <span class="t" style="left:14.30px;top:16.64px;font-size:13px;line-height:15px;letter-spacing:1.144px;">84</span>
  <span class="t" style="left:59.90px;top:16.64px;font-size:13px;line-height:15px;letter-spacing:-0.341px;">qqw</span>
  <span class="t" style="left:186.50px;top:16.64px;font-size:13px;line-height:15px;transform:scaleX(0.8862);transform-origin:0 0;">FIAT</span>
  <span class="t" style="left:306.90px;top:16.64px;font-size:13px;line-height:15px;letter-spacing:-0.273px;">Online pay</span>
  
  <span class="t" style="left:658.50px;top:16.64px;font-size:13px;line-height:15px;letter-spacing:-0.040px;color:#4da673;">Active</span>
  <span class="t" style="left:728.50px;top:7.64px;font-size:13px;line-height:15px;letter-spacing:0.612px;">2024-03-26</span><span class="t" style="left:728.50px;top:25.64px;font-size:13px;line-height:15px;letter-spacing:-0.316px;">15:14:52</span><span class="t" style="left:876.10px;top:7.64px;font-size:13px;line-height:15px;letter-spacing:0.612px;">2024-03-26</span><span class="t" style="left:876.10px;top:25.64px;font-size:13px;line-height:15px;letter-spacing:-0.176px;">11:06:08</span>
  <span class="ab ed"><span class="t" style="left:15.70px;top:10.64px;font-size:14px;line-height:16px;letter-spacing:-0.074px;-webkit-text-stroke:0.35px;color:#2a5f9e;">Edit</span></span>
  <span class="ab dis"><span class="t" style="left:16.20px;top:10.64px;font-size:14px;line-height:16px;letter-spacing:0.018px;-webkit-text-stroke:0.35px;color:#c9504f;">Disable</span></span>
  <span class="t more" style="left:1198.20px;top:15.64px;font-size:14px;line-height:16px;letter-spacing:0.369px;-webkit-text-stroke:0.35px;color:#2a5f9e;">More</span>
  </div>
  </div>
  <div class="pag">
    <span class="t" style="left:7.20px;top:22.00px;font-size:11px;line-height:12px;letter-spacing:-0.179px;color:#858585;">Press</span><span class="t" style="left:39.30px;top:21.00px;font-size:10.5px;line-height:12px;font-family:&quot;DejaVu Sans&quot;,sans-serif;color:#858585;">←</span><span class="t" style="left:52.00px;top:22.00px;font-size:10.5px;line-height:12px;font-family:&quot;DejaVu Sans&quot;,sans-serif;color:#858585;">↑</span><span class="t" style="left:63.20px;top:21.00px;font-size:10.5px;line-height:12px;font-family:&quot;DejaVu Sans&quot;,sans-serif;color:#858585;">→</span><span class="t" style="left:75.90px;top:22.00px;font-size:10.5px;line-height:12px;font-family:&quot;DejaVu Sans&quot;,sans-serif;color:#858585;">↓</span><span class="t" style="left:86.90px;top:22.00px;font-size:11px;line-height:12px;letter-spacing:0.191px;color:#858585;">on your keyboard to scroll the table</span>
    <svg class="abs" style="left:496.6px;top:22.8px" width="9" height="12" viewBox="0 0 9 12" fill="none" stroke="#333" stroke-width="1.15"><path d="M7.1 1.5 L1.4 6 L7.1 10.5"/></svg>
    <div class="pg on" style="left:514.7px"><span class="t" style="left:10.30px;top:7.10px;font-size:14px;line-height:16px;color:#fff;">1</span></div>
    <div class="pg" style="left:550px"><span class="t" style="left:10.50px;top:7.10px;font-size:14px;line-height:16px;color:#777;">2</span></div>
    <span class="t" style="left:586.10px;top:21.00px;font-size:14px;line-height:16px;letter-spacing:0.516px;color:#777;">/ 2</span>
    <div class="pin"><span class="t" style="left:7.50px;top:7.10px;font-size:13px;line-height:15px;color:#111;">1</span></div>
    <svg class="abs" style="left:682.4px;top:22.8px" width="9" height="12" viewBox="0 0 9 12" fill="none" stroke="#333" stroke-width="1.15"><path d="M1.7 1.5 L7.4 6 L1.7 10.5"/></svg>
    <span class="t" style="left:701.70px;top:21.00px;font-size:14px;line-height:16px;letter-spacing:0.045px;color:#777;">91 Records</span>
    <span class="t" style="left:1062.90px;top:21.00px;font-size:14px;line-height:16px;letter-spacing:0.263px;color:#777;">Items per page</span>
    <div class="psel"><span class="t" style="left:15.70px;top:10.70px;font-size:14px;line-height:16px;letter-spacing:0.532px;color:#333;">50</span><svg width="11" height="7" viewBox="0 0 11 7" fill="none" stroke="#333" stroke-width="1.15"><path d="M0.8 0.8 L5.5 5.6 L10.2 0.8"/></svg></div>
  </div>
</div>
</div>
<div class="botfade"><i></i></div>
</body>
</html>
